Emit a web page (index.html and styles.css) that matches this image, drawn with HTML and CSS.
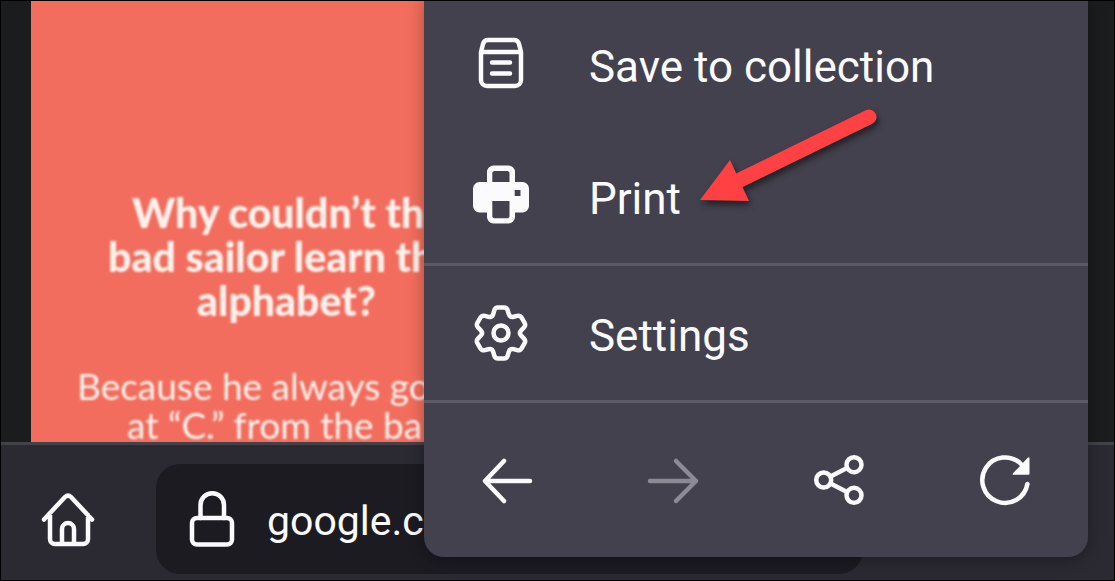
FILE: index.html
```html
<!DOCTYPE html>
<html lang="en">
<head>
<meta charset="utf-8">
<title>Browser menu</title>
<link rel="stylesheet" href="styles.css">
</head>
<body>
<div class="screen">
  <main class="content">
    <article class="page">
      <h1 class="question">
        <span class="line line-why">Why couldn’t the</span>
        <span class="line line-bad">bad sailor learn the</span>
        <span class="line line-alphabet">alphabet?</span>
      </h1>
      <p class="answer">
        <span class="line line-because">Because he always go</span>
        <span class="line line-at">at “C.” from the ba</span>
      </p>
    </article>
  </main>

  <footer class="navbar">
    <button class="home" type="button" aria-label="Home">
      <svg class="icon" viewBox="0 0 60 60"><path d="M6 30.5 27 8Q30 5 33 8L54 30.5M12 26V50a5 5 0 0 0 5 5H45a5 5 0 0 0 5-5V26M24 55V40a6 6 0 0 1 12 0V55"/></svg>
    </button>
    <button class="address" type="button">
      <svg class="icon" viewBox="0 0 60 60"><rect x="10" y="29" width="40" height="26.5" rx="5"/><path d="M18.5 29V16a11.7 11.7 0 0 1 23.5 0V29"/></svg>
      <span class="host">google.com</span>
    </button>
  </footer>

  <nav class="menu" aria-label="Browser menu">
    <div class="group">
      <button class="item" type="button">
        <svg class="icon" viewBox="0 0 60 60"><path d="M10 19V47a6 6 0 0 0 6 6H44a6 6 0 0 0 6-6V19L48 11Q47 7 43 7H17Q13 7 12 11ZM10 19H50M21 29.5H39M21 40.5H39"/></svg>
        <span class="label">Save to collection</span>
      </button>
      <button class="item" type="button">
        <svg class="icon" viewBox="0 0 60 60"><path class="solid" fill-rule="evenodd" d="M16 17V7a6.500 6.500 0 0 1 6.500-6.500H37.500A6.500 6.500 0 0 1 44 7V17H51.500A6.500 6.500 0 0 1 58 23.500V41a6.500 6.500 0 0 1-6.500 6.500H44V52a6.500 6.500 0 0 1-6.500 6.500H22.500A6.500 6.500 0 0 1 16 52V47.500H8.500A6.500 6.500 0 0 1 2 41V23.500A6.500 6.500 0 0 1 8.500 17ZM21.300 17H38.500V7.500L37 6H23L21.300 7.500ZM21.300 36V52L23 53.300H37L38.500 52V36ZM43.700 25V31H49.500V25Z"/></svg>
        <span class="label">Print</span>
      </button>
    </div>
    <div class="group">
      <button class="item" type="button">
        <svg class="icon" viewBox="-30 -31 60 60"><circle r="7.500"/><path d="M-3-25.500H3Q6-25.500 6.800-22.400L7.700-19.100Q8.800-15.200 12.700-16.200L16-17.100Q19.100-17.900 20.600-15.300L23.600-10.200Q25.100-7.600 22.800-5.300L20.400-2.900Q17.500 0 20.400 2.900L22.800 5.300Q25.100 7.600 23.600 10.200L20.600 15.300Q19.100 17.900 16 17.100L12.700 16.200Q8.800 15.200 7.700 19.100L6.800 22.400Q6 25.500 3 25.500H-3Q-6 25.500-6.800 22.400L-7.700 19.100Q-8.800 15.200-12.700 16.200L-16 17.100Q-19.100 17.900-20.600 15.300L-23.600 10.200Q-25.100 7.600-22.800 5.300L-20.400 2.900Q-17.500 0-20.400-2.900L-22.800-5.300Q-25.100-7.600-23.600-10.200L-20.600-15.300Q-19.100-17.900-16-17.100L-12.700-16.200Q-8.800-15.200-7.700-19.100L-6.800-22.400Q-6-25.500-3-25.500Z"/></svg>
        <span class="label">Settings</span>
      </button>
    </div>
    <div class="toolbar">
      <button class="tool" type="button" aria-label="Back">
        <svg class="icon" viewBox="0 0 60 60"><path d="M53 31H8M27 11 8 31 27 51"/></svg>
      </button>
      <button class="tool" type="button" aria-label="Forward" disabled>
        <svg class="icon" viewBox="0 0 60 60"><path d="M7 31H53M33 11 53 31 33 51"/></svg>
      </button>
      <button class="tool" type="button" aria-label="Share">
        <svg class="icon" viewBox="0 0 60 60"><circle cx="14.700" cy="30" r="7.500"/><circle cx="45" cy="14.700" r="7.500"/><circle cx="45" cy="45.300" r="7.500"/><path d="M21.500 26.500 38 18M21.500 33.500 38 42"/></svg>
      </button>
      <button class="tool" type="button" aria-label="Reload">
        <svg class="icon" viewBox="0 0 60 60"><path d="M52.400 34A22.700 22.700 0 1 1 46 14"/><path class="solid" d="M54.500 8.500V23.500Q54.500 24.700 53.300 24.700H38.500Q37 24.700 38 23.300L52.500 8Q54.500 6.500 54.500 8.500Z"/></svg>
      </button>
    </div>
    <svg class="pointer" viewBox="0 0 188 104" aria-hidden="true">
      <path class="pointer-shaft" d="M42 75 173 11"/>
      <path class="pointer-head" d="M4 94 34 54 53 95Z"/>
    </svg>
  </nav>
</div>
</body>
</html>
```

FILE: styles.css
```css
* {
  box-sizing: border-box;
}

body {
  margin: 0;
  background: #000;
  color: #fbfbfe;
  font-family: Roboto, "Liberation Sans", sans-serif;
}

button {
  border: 0;
  padding: 0;
  background: none;
  color: inherit;
  font: inherit;
  text-align: left;
}

.screen {
  position: relative;
  display: flex;
  flex-direction: column;
  height: 100vh;
  border: 1px solid #000;
  overflow: hidden;
}

.content {
  flex: 1;
  min-height: 0;
  display: flex;
  padding: 0 26px 0 30px;
  background: #1a1c1e;
}

.page {
  flex: 1;
  min-width: 0;
  padding-top: 190px;
  overflow: hidden;
  background: #f26d5d;
  color: #fff1ec;
  font-family: Lato, "Open Sans", sans-serif;
  white-space: nowrap;
}

.question,
.answer {
  margin: 0;
  filter: blur(1px);
}

.question {
  font-size: 41px;
  font-weight: 900;
  line-height: 44px;
}

.answer {
  margin-top: 43px;
  font-size: 37px;
  line-height: 39px;
}

.line {
  display: block;
}

.line-why { padding-left: 101px; }
.line-bad { padding-left: 77px; }
.line-alphabet { padding-left: 166px; }
.line-because { padding-left: 46px; }
.line-at { padding-left: 96px; }

.icon {
  display: block;
  flex: none;
  width: 60px;
  height: 60px;
  fill: none;
  stroke: currentColor;
  stroke-width: 4.5;
  stroke-linecap: round;
  stroke-linejoin: round;
}

.icon .solid {
  fill: currentColor;
  stroke: none;
}

.navbar {
  display: flex;
  align-items: center;
  gap: 58px;
  padding: 19px 251px 6px 37px;
  border-top: 3px solid #424247;
  background: #2b2a33;
}

.address {
  flex: 1;
  min-width: 0;
  display: flex;
  align-items: center;
  gap: 25px;
  height: 110px;
  padding: 0 26px;
  border-radius: 24px;
  background: #1c1b22;
  font-size: 41px;
}

.host {
  padding-top: 4px;
}

.menu {
  position: absolute;
  top: -4px;
  left: 38%;
  right: 26px;
  border-radius: 0 0 20px 20px;
  background: #42414d;
  box-shadow: 0 4px 16px rgba(0, 0, 0, 0.3);
  font-size: 44px;
}

.group {
  padding-bottom: 2px;
  border-bottom: 3px solid #5b5a66;
}

.item {
  display: flex;
  align-items: center;
  gap: 58px;
  width: 100%;
  height: 132px;
  padding-left: 47px;
}

.label {
  padding-top: 7px;
}

.toolbar {
  display: flex;
  height: 154px;
}

.tool {
  flex: 1;
  display: flex;
  align-items: center;
  justify-content: center;
}

.tool:disabled {
  color: #8c8b95;
}

.pointer {
  position: absolute;
  top: 109px;
  left: 272px;
  width: 188px;
  height: 104px;
  overflow: visible;
  filter: drop-shadow(2px 4px 3px rgba(0, 0, 0, 0.5));
}

.pointer-shaft {
  fill: none;
  stroke: #ff4143;
  stroke-width: 15;
  stroke-linecap: round;
}

.pointer-head {
  fill: #ff4143;
}
```
